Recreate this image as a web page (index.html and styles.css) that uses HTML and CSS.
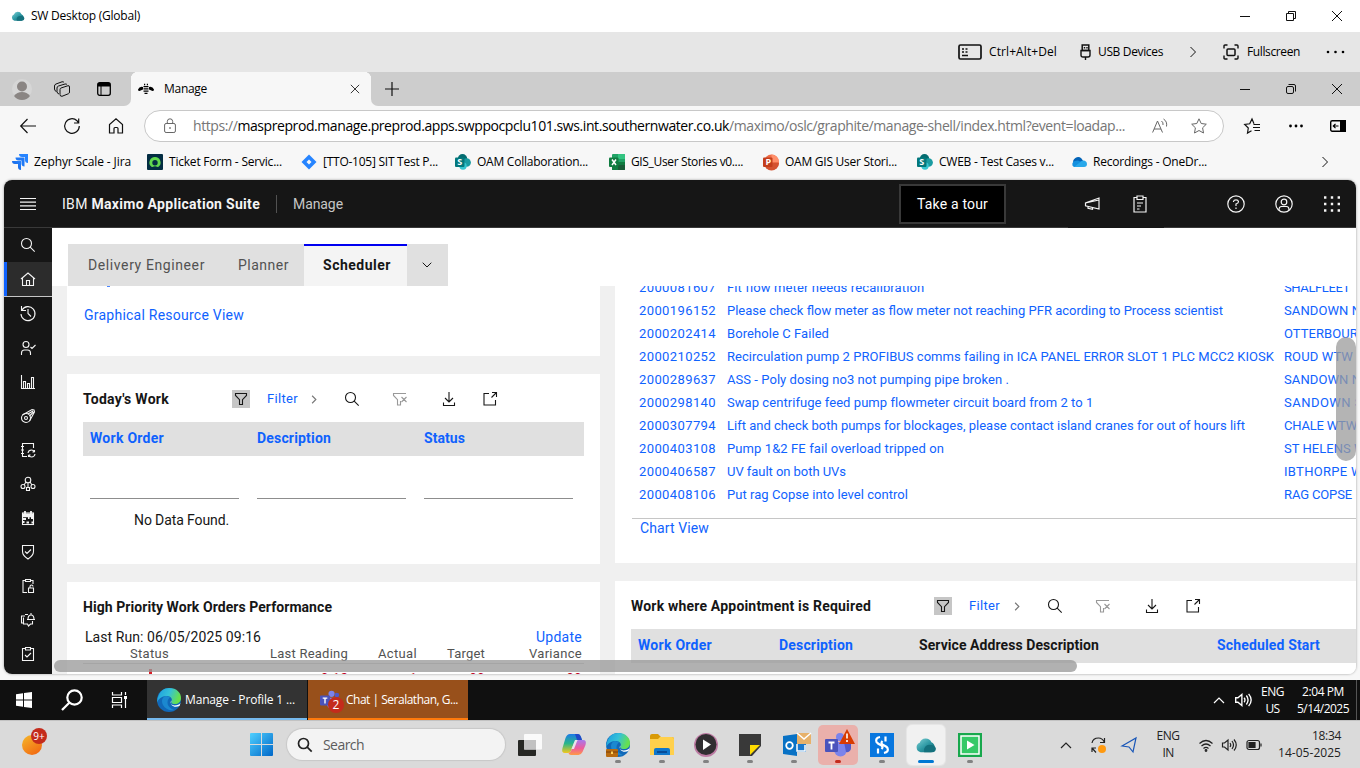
FILE: index.html
```html
<!DOCTYPE html>
<html lang="en">
<head>
<meta charset="utf-8">
<title>SW Desktop (Global)</title>
<link rel="stylesheet" href="styles.css">
</head>
<body>
<svg class="defs" width="0" height="0">
  <defs>
    <linearGradient id="gCloud" x1="0" y1="0" x2="1" y2="1"><stop offset="0" stop-color="#7fd0d4"/><stop offset=".5" stop-color="#2f9aa5"/><stop offset="1" stop-color="#0b5f6c"/></linearGradient>
    <linearGradient id="gEdge" x1="0" y1="0" x2="1" y2=".3"><stop offset="0" stop-color="#1a9be0"/><stop offset=".55" stop-color="#35c1d8"/><stop offset="1" stop-color="#66e04f"/></linearGradient>
    <linearGradient id="gWin" x1="0" y1="0" x2="1" y2="1"><stop offset="0" stop-color="#4fd0ff"/><stop offset="1" stop-color="#0067c8"/></linearGradient>
    <linearGradient id="gSun" x1="0" y1="0" x2=".7" y2="1"><stop offset="0" stop-color="#f5b92c"/><stop offset="1" stop-color="#f26a12"/></linearGradient>
    <linearGradient id="gJira" x1="1" y1="0" x2="0" y2="1"><stop offset="0" stop-color="#2684ff"/><stop offset="1" stop-color="#0d5bd8"/></linearGradient>
    <linearGradient id="gCopA" x1="0" y1="0" x2="0" y2="1"><stop offset="0" stop-color="#1d7be8"/><stop offset=".5" stop-color="#29b68a"/><stop offset="1" stop-color="#f3c81c"/></linearGradient>
    <linearGradient id="gCopB" x1="0" y1="0" x2="0" y2="1"><stop offset="0" stop-color="#a678ee"/><stop offset=".55" stop-color="#ee5c9c"/><stop offset="1" stop-color="#ff9a45"/></linearGradient>
  </defs>
  <symbol id="cloud" viewBox="0 0 24 20"><path d="M6 18a5.500 5.500 0 0 1-1-10.500A7 7 0 0 1 18 7a6 6 0 0 1 0 11z" fill="url(#gCloud)"/><path d="M10 18a6 6 0 0 1 7-8 5 5 0 0 1 6 4 4 4 0 0 1-4 4z" fill="#14717d"/></symbol>
  <symbol id="min" viewBox="0 0 12 12"><path d="M1 6.500h10" /></symbol>
  <symbol id="restore" viewBox="0 0 12 12"><path d="M1.500 3.500h7v7h-7zM3.500 3V1.500h7v7H9"/></symbol>
  <symbol id="restoreR" viewBox="0 0 12 12"><rect x="1.500" y="3.500" width="7" height="7" rx="1.500"/><path d="M3.500 1.500H9A1.500 1.500 0 0 1 10.500 3v5.500"/></symbol>
  <symbol id="close" viewBox="0 0 12 12"><path d="M1 1l10 10M11 1L1 11"/></symbol>
  <symbol id="chev" viewBox="0 0 8 12"><path d="M1.500 1l5 5-5 5"/></symbol>
  <symbol id="funnel" viewBox="0 0 16 16"><path d="M2.500 2.500h11v2l-4 4.200v4.800h-3V8.700l-4-4.200z"/></symbol>
  <symbol id="funnelx" viewBox="0 0 16 16"><path d="M14 2.500H1.500v2l4 4.200v5.300h3V10M9.500 6l5 5M14.500 6l-5 5"/></symbol>
  <symbol id="search" viewBox="0 0 16 16"><circle cx="6.500" cy="6.500" r="5"/><path d="M10.200 10.200l4.500 4.500"/></symbol>
  <symbol id="download" viewBox="0 0 16 16"><path d="M8 1v10M4 7l4 4 4-4M2.500 11.500v3h11v-3"/></symbol>
  <symbol id="launch" viewBox="0 0 16 16"><path d="M7 2.500H2v11.500h11.500V9M10 1.500h4.500V6M14.500 1.500l-5 5"/></symbol>
  <symbol id="edge" viewBox="0 0 24 24"><circle cx="12" cy="12" r="12" fill="#1168b8"/><path d="M1 9C3 3 7 0 12 0c8 0 12 5 12 10 0 4-3 6-6 6-3 0-4-1-3.500-2.500C16 10 13 8 9 8c-4 0-8 3-8.800 6.500A12 12 0 0 1 1 9z" fill="url(#gEdge)"/><path d="M14.500 12.500c-2 2 0 5 3 5 3 0 5-1 6-2.500l-1 3c-5 2-10 0-8-5.500z" fill="#fff"/><path d="M9 8c-4 1-5 5-3 9 2 4 7 6 11 5-6-2-9-8-4-13z" fill="#1b88d0"/></symbol>
  <symbol id="sharepoint" viewBox="0 0 16 16"><circle cx="7.500" cy="4.700" r="4.700" fill="#036c70"/><circle cx="11.600" cy="8.500" r="4.300" fill="#1a9ba1"/><circle cx="8" cy="12" r="3.700" fill="#37c6d0"/><rect y="3.500" width="9.500" height="9.500" rx="1" fill="#03787c"/><text x="2.300" y="11.200" class="glyph">S</text></symbol>
  <symbol id="volume" viewBox="0 0 16 16"><path d="M1.500 6v4h2L7 13V3L3.500 6zM9 6q1.500 2 0 4M11 4q3 4 0 8M13 2.500q4.500 5.500 0 11"/></symbol>
  <symbol id="teams" viewBox="0 0 26 26"><circle cx="15" cy="5" r="4" fill="#7b83eb"/><circle cx="22" cy="6.500" r="3" fill="#5059c9"/><path d="M9 10h13v8a6.500 6.500 0 0 1-13 0z" fill="#7b83eb"/><path d="M19 10h7v6a4 4 0 0 1-5 4z" fill="#5059c9"/><rect y="7" width="13" height="13" rx="1" fill="#4b53bc"/><path d="M3.500 10.500h6M6.500 10.500v7" stroke="#fff" stroke-width="1.800"/></symbol>
</svg>

<header class="titlebar">
  <svg class="i14"><use href="#cloud"/></svg>
  <span class="t" data-w="109">SW Desktop (Global)</span>
  <div class="winctl"><i><svg class="i12"><use href="#min"/></svg></i><i><svg class="i12"><use href="#restore"/></svg></i><i><svg class="i12"><use href="#close"/></svg></i></div>
</header>

<div class="toolbar">
  <svg class="kbd ic" viewBox="0 0 24 16"><rect x="1" y="1" width="22" height="14" rx="1.500" stroke-width="1.700"/><path d="M4 5h2M7.500 5h2M4 8h2M7.500 8h2M4 11.500h6" stroke-width="1.500"/></svg>
  <span class="t" data-w="68">Ctrl+Alt+Del</span>
  <svg class="usb ic" viewBox="0 0 11 16"><rect x="2.200" y="1" width="6.600" height="5.500" stroke-width="1.500"/><path d="M1 6.500h9v4.500q0 2-2 2H3q-2 0-2-2zM5.500 13v3M4.500 3v1.500M7 3v1.500" stroke-width="1.400"/></svg>
  <span class="t" data-w="65">USB Devices</span>
  <svg class="tbchev ic"><use href="#chev"/></svg>
  <svg class="full ic" viewBox="0 0 16 16"><path d="M1 4.500V2q0-1 1-1h2.500M11.500 1H14q1 0 1 1v2.500M15 11.500V14q0 1-1 1h-2.500M4.500 15H2q-1 0-1-1v-2.500" stroke-width="1.400"/><rect x="4" y="5" width="8" height="6.500" rx="1" stroke-width="1.500"/></svg>
  <span class="t" data-w="53">Fullscreen</span>
  <svg class="dots" viewBox="0 0 20 4"><circle cx="2" cy="2" r="1.300"/><circle cx="9.500" cy="2" r="1.300"/><circle cx="17" cy="2" r="1.300"/></svg>
</div>

<div class="tabstrip">
  <div class="strip-left">
    <svg class="i20" viewBox="0 0 20 20"><circle cx="10" cy="10" r="10" fill="#d6d6d6"/><circle cx="10" cy="7.500" r="5" fill="#8a8583"/><path d="M2 17q3-4 8-4t8 4q-3 4-8 4t-8-4z" fill="#8a8583"/></svg>
    <svg class="coll ic" viewBox="0 0 16 16"><path d="M2.500 10.500Q.5 10 .5 8V5q0-1.500 1.500-2L8 .8q1.500-.3 2 .7M5 13q-2-.5-2-2.500V7q0-1.500 1.500-2L11 3q1.500-.3 2 .7"/><path d="M7 7l7-2.300q1.500-.3 1.500 1.300v5q0 1.300-1 1.700L8 15.300Q6 15.500 6 13.500V8.500Q6 7.400 7 7z"/></svg>
    <svg class="sq" viewBox="0 0 14 14"><rect x=".7" y=".7" width="12.600" height="12.600" rx="2" fill="none" stroke="#000" stroke-width="1.300"/><path d="M1 1h12v3.500H1z"/><path d="M4 4v9" stroke="#000"/></svg>
  </div>
  <div class="tab">
    <svg class="i16" viewBox="0 0 16 16"><path d="M0 8.500Q1.500 5 5 6v2.500L1.500 10Q0 10 0 8.500zM16 8.500Q14.500 5 11 6v2.500l3.500 1.500Q16 10 16 8.500zM5.500 5h5v1.200h-5zM5.500 7.300h5v1.200h-5zM5.500 9.500h5v1.200h-5zM6.500 11.800h3v1.200h-3zM6 2.800h1.200v1.400H6zM8.800 2.800H10v1.400H8.800z"/></svg>
    <span class="t" data-w="43">Manage</span>
    <svg class="i10 ic"><use href="#close"/></svg>
  </div>
  <svg class="plus ic" viewBox="0 0 14 14"><path d="M7 0v14M0 7h14" stroke-width="1.200"/></svg>
  <div class="winctl"><i><svg class="i12"><use href="#min"/></svg></i><i><svg class="i12"><use href="#restoreR"/></svg></i><i><svg class="i12"><use href="#close"/></svg></i></div>
</div>

<div class="address">
  <svg class="i16 ic" viewBox="0 0 16 16"><path d="M16 8H.8M7.500 1L.7 8l6.800 7" stroke-width="1.200"/></svg>
  <svg class="i16 ic" viewBox="0 0 16 16"><path d="M15.300 8A7.300 7.300 0 1 1 13 2.700L14.500 5M14.700.5V5H10" stroke-width="1.200"/></svg>
  <svg class="i16 ic" viewBox="0 0 16 16"><path d="M1.500 15V6.500L8 .8l6.500 5.700V15H10v-4.500q0-1-1-1H7q-1 0-1 1V15z" stroke-width="1.200"/></svg>
  <div class="url">
    <svg class="lock" viewBox="0 0 12 16"><rect x=".6" y="5.500" width="10.800" height="9" rx="1.500"/><path d="M3.300 5.500v-2a2.700 2.700 0 0 1 5.400 0v2"/><circle cx="6" cy="10" r=".5"/></svg>
    <span class="t" data-w="932">https://<b>maspreprod.manage.preprod.apps.swppocpclu101.sws.int.southernwater.co.uk</b>/maximo/oslc/graphite/manage-shell/index.html?event=loadap...</span>
    <svg class="i16 g read" viewBox="0 0 16 16"><path d="M.6 14.500L5.500 3l5 11.500M2 11h7M9.500 3q2 1.500 1.500 4M11.500 1q4 2.500 3 7.500"/></svg>
    <svg class="i16 g" viewBox="0 0 16 16"><path d="M8 .8l2.200 4.700 5.100.7-3.700 3.600.9 5.200L8 12.500 3.500 15l.9-5.200L.7 6.200l5.100-.7z"/></svg>
  </div>
  <svg class="i16 ic" viewBox="0 0 16 16"><path d="M7.500 12.700L3.500 15l.8-5L.7 6.500l5-.7L8 1l2 4.800M9.500 6.500H16M9 9.500h7M10.500 12.500H16" stroke-width="1.200"/></svg>
  <svg class="more" viewBox="0 0 14 4"><circle cx="1.500" cy="2" r="1.400"/><circle cx="7" cy="2" r="1.400"/><circle cx="12.500" cy="2" r="1.400"/></svg>
  <svg class="i16" viewBox="0 0 16 16"><rect x=".7" y="2.700" width="14.600" height="10.600" rx="1.500" fill="none" stroke="#000" stroke-width="1.400"/><path d="M10 2h6v12h-6z"/><path d="M8.500 8H3.500M5.500 5.800L3.300 8l2.200 2.200" fill="none" stroke="#000" stroke-width="1.200"/></svg>
</div>

<nav class="bookmarks">
  <div><svg class="i16" viewBox="0 0 16 16"><path d="M7 0h9v9q-3 0-3-3V3h-3Q7 3 7 0z" fill="#2684ff"/><path d="M3.500 3.500h9v9q-3 0-3-3v-3h-3q-3 0-3-3z" fill="#2079f5"/><path d="M0 7h9v9q-3 0-3-3v-3H3Q0 10 0 7z" fill="url(#gJira)"/></svg><span class="t" data-w="97">Zephyr Scale - Jira</span></div>
  <div><svg class="i16" viewBox="0 0 16 16"><rect width="16" height="16" rx="1" fill="#032d42"/><path d="M8 3a5.500 5.500 0 0 0-3.500 9.800q.8.400 1.500 0 2-1 4 0 .8.400 1.500 0A5.500 5.500 0 0 0 8 3zm0 3a2.700 2.700 0 1 1 0 5.400A2.700 2.700 0 0 1 8 6z" fill="#62d84e"/></svg><span class="t" data-w="113">Ticket Form - Servic...</span></div>
  <div><svg class="i16" viewBox="0 0 16 16"><path d="M8 .5L15.500 8 8 15.500.5 8z" fill="#2684ff"/><path d="M8 5.500L10.500 8 8 10.500 5.500 8z" fill="#f7f7f7"/></svg><span class="t" data-w="115">[TTO-105] SIT Test P...</span></div>
  <div><svg class="i16"><use href="#sharepoint"/></svg><span class="t" data-w="111">OAM Collaboration...</span></div>
  <div><svg class="i16" viewBox="0 0 16 16"><rect x="3" width="13" height="16" rx="1" fill="#21a366"/><path d="M3 8h13v7q0 1-1 1H3z" fill="#107c41"/><path d="M9 0h6q1 0 1 1v4H9z" fill="#33c481"/><path d="M9 11h7v4q0 1-1 1H9z" fill="#185c37"/><rect y="3.500" width="9.500" height="9.500" rx="1" fill="#107c41"/><path d="M3 5.500l4 5.500M7 5.500L3 11" stroke="#fff" stroke-width="1.500"/></svg><span class="t" data-w="112">GIS_User Stories v0....</span></div>
  <div><svg class="i16" viewBox="0 0 16 16"><circle cx="8.500" cy="8" r="7.500" fill="#ed6c47"/><path d="M8.500.5A7.500 7.500 0 0 1 16 8H8.500z" fill="#ff8f6b"/><path d="M1 9h15a7.500 7.500 0 0 1-15 0z" fill="#d35230"/><rect y="3.500" width="9.500" height="9.500" rx="1" fill="#c43e1c"/><text x="2.600" y="11.200" class="glyph">P</text></svg><span class="t" data-w="112">OAM GIS User Stori...</span></div>
  <div><svg class="i16"><use href="#sharepoint"/></svg><span class="t" data-w="115">CWEB - Test Cases v...</span></div>
  <div><svg class="i16" viewBox="0 0 16 16"><path d="M2.500 10a5 5 0 0 1 8-5.500l2 3L8 12z" fill="#0364b8"/><path d="M3 13a3.200 3.200 0 0 1 1-6q3-1 5 .5l2-.500a4.500 4.500 0 0 1 2 6z" fill="#1490df"/><path d="M3 13q4-3 7-5.500a3.500 3.500 0 0 1 6 2.500q0 3-3 3z" fill="#28a8ea"/></svg><span class="t" data-w="114">Recordings - OneDr...</span></div>
  <svg class="bchev ic"><use href="#chev"/></svg>
</nav>

<section class="app">
  <header class="apphead">
    <svg class="i16 burger" viewBox="0 0 16 16"><path d="M0 2.500h16M0 6.200h16M0 9.800h16M0 13.500h16"/></svg>
    <span class="t brand" data-w="198">IBM <b>Maximo Application Suite</b></span>
    <span class="t product" data-w="50">Manage</span>
    <button class="tour"><span class="t" data-w="71">Take a tour</span></button>
    <div class="slots flat">
      <i><svg class="i16" viewBox="0 0 16 16"><path d="M15 2v11L1.500 9.800v-3zM1.500 6.800L15 4M4 10.300v2l4.500 1v-2"/></svg></i>
      <i><svg class="clip" viewBox="0 0 16 18"><path d="M5 2.500H2v14.500h12V2.500H11M5 1h6v3.500H5zM5 8h6M5 11h4M5 14h2.500"/></svg></i>
    </div>
    <div class="slots">
      <i><svg class="i18" viewBox="0 0 18 18"><circle cx="9" cy="9" r="8.200"/><path d="M6.500 7V6.500q.3-1.700 2.500-1.700t2.500 1.900Q11.500 8 9 9v2M9 12.500v1.500"/></svg></i>
      <i><svg class="i18" viewBox="0 0 18 18"><circle cx="9" cy="9" r="8.200"/><circle cx="9" cy="7" r="2.800"/><path d="M4 15q0-3.500 2.500-3.500h5Q14 11.500 14 15"/></svg></i>
      <i><svg class="i16 nine" viewBox="0 0 16 16"><path d="M0 1.500h16M0 8h16M0 14.500h16"/></svg></i>
    </div>
  </header>
  <div class="body">
    <aside class="side">
      <i><svg class="i16"><use href="#search"/></svg></i>
      <i class="on"><svg class="i16" viewBox="0 0 16 16"><path d="M1 8l7-6 7 6M2.500 7v7.500h11V7M6.500 14.500v-5h3v5"/></svg></i>
      <i><svg class="i16" viewBox="0 0 16 16"><path d="M2 5a7 7 0 1 1-1 4M1.500 1v4.500H6M8 4v4.500l3 3"/></svg></i>
      <i><svg class="i16" viewBox="0 0 16 16"><circle cx="6" cy="4.500" r="3"/><path d="M1.500 15v-2q0-3 3-3h3q3 0 3 3v2M10.500 7l1.500 1.500 3.500-3.500"/></svg></i>
      <i><svg class="i16" viewBox="0 0 16 16"><path d="M1.500 1v13.500H15M3.500 14V7.500h2V14M7.500 14V9.500h2V14M11.500 14V3.500h2V14"/></svg></i>
      <i><svg class="i16" viewBox="0 0 16 16"><circle cx="6" cy="10" r="4.500"/><circle cx="6" cy="10" r="1.500"/><path d="M2.500 7L12 1.500l2 .500.500 2L9.500 13M8 6l5-3M9.500 8l4-4"/></svg></i>
      <i><svg class="i16" viewBox="0 0 16 16"><path d="M13.500 6V1.500h-11v13H7M1 4.500h3M1 8h3M1 11.500h3M8 11q.5-3 3.500-3 2 0 3 2V8M14.500 10h-2M15 12q-.5 3-3.500 3-2 0-3-2v2M8.500 13h2"/></svg></i>
      <i><svg class="i16" viewBox="0 0 16 16"><circle cx="8" cy="4" r="2.800"/><circle cx="3" cy="10.500" r="2"/><circle cx="13" cy="10.500" r="2"/><path d="M8 7v4M6 6l-2 3M10 6l2 3M6.500 11.500h3v3h-3z"/></svg></i>
      <i><svg class="i16" viewBox="0 0 16 16"><rect x="2.500" y="3" width="11" height="11.500"/><path d="M2 4.500h12M5 1v3M11 1v3" stroke-width="1.800"/><path d="M3 9h3M8 8h1.500M11 8h2M3 12h1.500M6.500 12.500h2.500M2.500 6.200h11M11.500 12.500h2" stroke-width="2.200"/></svg></i>
      <i><svg class="i16" viewBox="0 0 16 16"><path d="M2.500 1.500h11v6q0 4-5.500 7.500-5.500-3.500-5.500-7.500zM5 7.500l2 2 4-4"/></svg></i>
      <i><svg class="i16" viewBox="0 0 16 16"><path d="M5 2.500H3v12h4M11 2.500h2V6M5.500 1.500h5v2h-5zM8.500 10h5v4.500h-5zM10 10V8.500q0-1.500 1.500-1.500t1.500 1.500"/></svg></i>
      <i><svg class="i16" viewBox="0 0 16 16"><path d="M5 4H1.500v7H4M3.500 5.500V12h4l1 2 2-2h2V9M7 7.500h8M8 7.500q0-4.500 3-4.500t3 4.500M11 1v2M5 2.500h3"/></svg></i>
      <i><svg class="i16" viewBox="0 0 16 16"><path d="M5 2.500H2.500v12h11v-12H11M5.500 1.500h5v2.500h-5zM5 9l2 2 4-4"/></svg></i>
    </aside>
    <main class="main">
      <div class="tabs">
        <span class="ptab"><span class="t" data-w="117">Delivery Engineer</span></span>
        <span class="ptab"><span class="t" data-w="51">Planner</span></span>
        <span class="ptab sel"><span class="t" data-w="68">Scheduler</span></span>
        <span class="drop"><svg viewBox="0 0 10 6"><path d="M.7.7L5 5 9.300.7"/></svg></span>
      </div>
      <div class="cols">
        <div class="col left">
          <section class="card views"><div class="sliver"></div><a class="t" data-w="160">Graphical Resource View</a></section>
          <section class="card today">
            <div class="bar"><h2 class="t" data-w="86">Today's Work</h2>
              <div class="tools"><i class="fb"><svg class="i16"><use href="#funnel"/></svg></i><a class="t" data-w="31">Filter</a><svg class="fc"><use href="#chev"/></svg><svg class="i16"><use href="#search"/></svg><svg class="i16 dim"><use href="#funnelx"/></svg><svg class="i16"><use href="#download"/></svg><svg class="i16"><use href="#launch"/></svg></div></div>
            <div class="thead three"><a class="t" data-w="74">Work Order</a><a class="t" data-w="74">Description</a><a class="t" data-w="41">Status</a></div>
            <div class="inputs"><u></u><u></u><u></u></div>
            <p class="nodata"><span class="t" data-w="95">No Data Found.</span></p>
          </section>
          <section class="card perf">
            <h2 class="t" data-w="249">High Priority Work Orders Performance</h2>
            <div class="run"><span class="t" data-w="176">Last Run: 06/05/2025 09:16</span><a class="t" data-w="46">Update</a></div>
            <div class="kpi"><span><span class="t" data-w="39">Status</span></span><span><span class="t" data-w="78">Last Reading</span></span><span><span class="t" data-w="39">Actual</span></span><span><span class="t" data-w="38">Target</span></span><span><span class="t" data-w="53">Variance</span></span></div>
            <div class="kpi vals"><span><i class="flag"></i></span><span>0.12</span><span>1</span><span>00</span><span>00</span></div>
          </section>
        </div>
        <div class="col right">
          <section class="card list">
            <div class="rows">
              <a class="t" data-w="77">2000081607</a><a class="t" data-w="197">Fit flow meter needs recalibration</a><a class="t" data-w="66">SHALFLEET</a>
              <a class="t" data-w="77">2000196152</a><a class="t" data-w="496">Please check flow meter as flow meter not reaching PFR acording to Process scientist</a><a class="t" data-w="131">SANDOWN NEW WTW</a>
              <a class="t" data-w="77">2000202414</a><a class="t" data-w="102">Borehole C Failed</a><a class="t" data-w="125">OTTERBOURNE WTW</a>
              <a class="t" data-w="77">2000210252</a><a class="t" data-w="547">Recirculation pump 2 PROFIBUS comms failing in ICA PANEL ERROR SLOT 1 PLC MCC2 KIOSK</a><a class="t" data-w="69">ROUD WTW</a>
              <a class="t" data-w="77">2000289637</a><a class="t" data-w="282">ASS - Poly dosing no3 not pumping pipe broken .</a><a class="t" data-w="131">SANDOWN NEW WTW</a>
              <a class="t" data-w="77">2000298140</a><a class="t" data-w="366">Swap centrifuge feed pump flowmeter circuit board from 2 to 1</a><a class="t" data-w="131">SANDOWN SOUTH W</a>
              <a class="t" data-w="77">2000307794</a><a class="t" data-w="518">Lift and check both pumps for blockages, please contact island cranes for out of hours lift</a><a class="t" data-w="73">CHALE WTW</a>
              <a class="t" data-w="77">2000403108</a><a class="t" data-w="217">Pump 1&amp;2 FE fail overload tripped on</a><a class="t" data-w="101">ST HELENS WTW</a>
              <a class="t" data-w="77">2000406587</a><a class="t" data-w="119">UV fault on both UVs</a><a class="t" data-w="99">IBTHORPE WTW</a>
              <a class="t" data-w="77">2000408106</a><a class="t" data-w="181">Put rag Copse into level control</a><a class="t" data-w="68">RAG COPSE</a>
            </div>
            <div class="chart"><a class="t" data-w="69">Chart View</a></div>
          </section>
          <section class="card appt">
            <div class="bar"><h2 class="t" data-w="240">Work where Appointment is Required</h2>
              <div class="tools"><i class="fb"><svg class="i16"><use href="#funnel"/></svg></i><a class="t" data-w="31">Filter</a><svg class="fc"><use href="#chev"/></svg><svg class="i16"><use href="#search"/></svg><svg class="i16 dim"><use href="#funnelx"/></svg><svg class="i16"><use href="#download"/></svg><svg class="i16"><use href="#launch"/></svg></div></div>
            <div class="thead four"><a class="t" data-w="74">Work Order</a><a class="t" data-w="74">Description</a><span class="t" data-w="180">Service Address Description</span><a class="t" data-w="103">Scheduled Start</a></div>
          </section>
        </div>
      </div>
      <div class="vbar"></div>
      <div class="hbar"></div>
    </main>
  </div>
</section>

<div class="remote">
  <svg class="i16 rwin" viewBox="0 0 16 16"><path d="M0 2.300L7 1.300v6.200H0zM8 1.100L16 0v7.500H8zM0 8.500h7v6.200l-7-1zM8 8.500h8V16l-8-1.100z" fill="#fff"/></svg>
  <svg class="rsearch" viewBox="0 0 22 22"><circle cx="13.500" cy="8.500" r="7.200"/><path d="M8.300 13.700L1 21"/></svg>
  <svg class="rview" viewBox="0 0 17 16"><path d="M1.500 0v3h9V0M1.500 16v-3h9v3M1.500 5.500h9v5h-9zM14.500 0v3M14.500 7v9"/><path d="M13 4h3v3h-3z" fill="#fff" stroke="none"/></svg>
  <div class="task edge"><svg class="i24"><use href="#edge"/></svg><span class="t" data-w="110">Manage - Profile 1 ...</span></div>
  <div class="task chat"><span class="badged"><svg class="i20"><use href="#teams"/></svg><em>2</em></span><span class="t" data-w="112">Chat | Seralathan, G...</span></div>
  <div class="tray">
    <svg class="up" viewBox="0 0 12 8"><path d="M1 7l5-5 5 5"/></svg>
    <svg class="i18 vol"><use href="#volume"/></svg>
    <div class="two l"><span class="t" data-w="23">ENG</span><span class="t" data-w="14">US</span></div>
    <div class="two d"><span class="t" data-w="42">2:04 PM</span><span class="t" data-w="52">5/14/2025</span></div>
  </div>
</div>

<footer class="host">
  <div class="weather"><svg class="i20" viewBox="0 0 20 20"><circle cx="10" cy="10" r="10" fill="url(#gSun)"/></svg><em>9+</em></div>
  <svg class="hwin" viewBox="0 0 23 23"><path d="M0 1q0-1 1-1h10v11H0zM12 0h10q1 0 1 1v10H12zM0 12h11v11H1q-1 0-1-1zM12 12h11v10q0 1-1 1H12z" fill="url(#gWin)"/></svg>
  <div class="hsearch"><svg class="i16"><use href="#search"/></svg><span class="t" data-w="41">Search</span></div>
  <div class="apps">
    <i><svg class="i24" viewBox="0 0 24 24"><rect y="7" width="18" height="16" rx="1" fill="#262724"/><rect x="6" y="1" width="18" height="15.500" rx="1" fill="#fafafa"/><path d="M6 7h12v9.500H6z" fill="#c2c2c2"/></svg></i>
    <i><svg class="i24" viewBox="0 0 24 24"><path d="M8 1h8q2 0 3 3l1 3h-5q-2 0-3 3l-3 8q-1 2-3 2H3q-4 0-2.500-5l3-10Q5 1 8 1z" fill="url(#gCopA)"/><path d="M17 7h4q4 0 2.500 5l-3 7q-1.500 3-4 3H9q-2 0-2.500-2 2 0 3-3l3-7Q14 7 17 7z" fill="url(#gCopB)"/><path d="M13 7h2.500L12 16H9.500z" fill="#e9e4ea"/><path d="M13 1h3q2 0 3 3l1 3h-5z" fill="#2048c8"/></svg></i>
    <i class="run1"><svg class="i24" viewBox="0 0 24 24"><use href="#edge" width="24" height="24"/><rect y="16" width="12" height="8" rx="1" fill="#b86b10"/><path d="M0 19h12" stroke="#7a3e06"/><path d="M5 18.500h2v2.500H5z" fill="#ffd25a"/></svg></i>
    <i class="run1"><svg class="i24" viewBox="0 0 24 24"><path d="M0 3q0-2 2-2h6l3 3h11q2 0 2 2v4H0z" fill="#d99a06"/><path d="M0 6h8l2-2h12q2 0 2 2v16H0z" fill="#ffd04c"/><path d="M4 22v-5q0-2 2-2h12q2 0 2 2v5z" fill="#0f77cc"/><path d="M7 19h10" stroke="#074c98" stroke-width="2"/></svg></i>
    <i class="run1"><svg class="i24" viewBox="0 0 24 24"><circle cx="12" cy="12" r="12" fill="#bd7ca4"/><circle cx="12" cy="11.500" r="10.500" fill="#302e31"/><path d="M9 6.500l8 5-8 5.500z" fill="#fff"/></svg></i>
    <i class="run1"><svg class="i24" viewBox="0 0 24 24"><path d="M1 1h22v12l-9 10H1z" fill="#393939"/><path d="M12 12h10L12 22z" fill="#ffdc00"/></svg></i>
    <i class="run1 mail"><svg class="outlook" viewBox="0 0 28 24"><path d="M14 7h9v12h-9z" fill="#1a78cd"/><path d="M0 3l14-2v22L0 21z" fill="#0872c5"/><circle cx="6.500" cy="12.500" r="3.300" fill="none" stroke="#fff" stroke-width="1.800"/><path d="M14 0h14v11H14z" fill="#e7b16a"/><path d="M14 0l7 6 7-6M14 11v7h8v-6" fill="none" stroke="#fff" stroke-width="1.500"/></svg></i>
    <i class="run1 alert"><svg class="i26"><use href="#teams"/></svg><svg class="warn" viewBox="0 0 16 15"><path d="M8 0l8 15H0z" fill="#d83b01"/><path d="M8 4.500v5M8 11v2" stroke="#fff" stroke-width="1.600"/></svg></i>
    <i class="run1"><svg class="i24" viewBox="0 0 24 24"><path d="M0 0h24v24H0z" fill="#0877df"/><path d="M10 4Q5 5 6.500 9q.8 1.500 5 3.500 2 1.500 0 3.500M14 20q5-1 3.500-5-.8-1.500-5-3.500-2-1.500 0-3.500M15.500 3.500v5M8 15.500v5" fill="none" stroke="#fff" stroke-width="2.200"/></svg></i>
    <i class="cur"><svg class="hcloud"><use href="#cloud"/></svg></i>
    <i class="run1"><svg class="i24" viewBox="0 0 24 24"><path d="M0 0h24v24H0z" fill="#18a84d"/><path d="M3 3h18v18H3z" fill="#35c967" stroke="#fff" stroke-width="1.500"/><path d="M9 7.500l7.500 4.500L9 16.500z" fill="#fff"/></svg></i>
  </div>
  <div class="htray">
    <svg class="up" viewBox="0 0 12 8"><path d="M1 7l5-5 5 5"/></svg>
    <svg class="i18 sync" viewBox="0 0 18 18"><path d="M3 7q1-5 6.500-5 4 0 6 4.500M15.500 2v4.500H11M7 12H3v4M3 12l4 4.500"/><circle cx="13" cy="13" r="4" fill="#ff9a10" stroke="none"/></svg>
    <svg class="i16 loc" viewBox="0 0 16 16"><path d="M1 9L15 1l-3 14-4-5z"/></svg>
    <div class="two hl"><span class="t" data-w="23">ENG</span><span class="t" data-w="11">IN</span></div>
    <svg class="i16 wifi" viewBox="0 0 16 16"><path d="M1.500 6.500q6.500-6 13 0M3.500 9q4.500-4 9 0M5.500 11.500q2.500-2.200 5 0"/><circle cx="8" cy="13.500" r=".8"/></svg>
    <svg class="i16 hvol"><use href="#volume"/></svg>
    <svg class="i16 bat" viewBox="0 0 16 16"><rect x="1" y="3.500" width="12.500" height="9" rx="2"/><path d="M3 5.500h6v5H3z" fill="#222"/><path d="M15 6.500v3" /></svg>
    <div class="two hd"><span class="t" data-w="29">18:34</span><span class="t" data-w="63">14-05-2025</span></div>
  </div>
</footer>
<script src="labels.js"></script>
</body>
</html>
```
FILE: styles.css
```css
* { box-sizing: border-box; }
html, body { margin: 0; width: 1360px; height: 768px; overflow: hidden; }
body { display: flex; flex-direction: column; background: #f7f7f7; color: #000; font: 12px/16px "Open Sans", "Noto Sans", sans-serif; }
i, em, b { font-style: normal; }
a { text-decoration: none; }
h2, p { margin: 0; }
svg { display: block; flex: none; overflow: visible; }
.defs { position: absolute; }
.t { display: inline-block; flex: none; white-space: nowrap; }
.glyph { font: bold 9px "Open Sans", sans-serif; fill: #fff; }
.i10 { width: 10px; height: 10px; }
.i12 { width: 12px; height: 12px; }
.i14 { width: 14px; height: 12px; }
.i16 { width: 16px; height: 16px; }
.i18 { width: 18px; height: 18px; }
.i20 { width: 20px; height: 20px; }
.i24 { width: 24px; height: 24px; }
.i26 { width: 26px; height: 26px; }
.ic, .winctl svg { fill: none; stroke: #111; }
.winctl { display: flex; margin-left: auto; height: 100%; }
.winctl i { width: 46px; display: flex; align-items: center; justify-content: center; }

.titlebar { height: 32px; background: #fff; display: flex; align-items: center; padding-left: 11px; gap: 6px; flex: none; }
.toolbar { height: 40px; background: #e6e6e6; display: flex; align-items: center; padding-left: 958px; flex: none; }
.kbd { width: 24px; height: 16px; margin-right: 7px; }
.usb { width: 11px; height: 16px; margin: 0 7px 0 23px; }
.tbchev { width: 8px; height: 12px; margin: 0 26px; }
.full { width: 16px; height: 16px; margin-right: 8px; }
.dots { width: 20px; height: 4px; margin-left: 26px; }

.tabstrip { height: 34px; background: #f7f7f7; display: flex; flex: none; }
.strip-left { width: 131px; background: #cdcdcd; display: flex; align-items: center; padding-left: 12px; border-bottom-right-radius: 7px; }
.coll { width: 16px; height: 16px; margin: 0 27px 0 22px; }
.sq { width: 14px; height: 14px; }
.tab { width: 240px; display: flex; align-items: center; padding: 0 11px 0 7px; background: radial-gradient(circle at 7px 7px, #f7f7f7 7px, #cdcdcd 7.500px) 0 0 / 7px 7px no-repeat, radial-gradient(circle at 0 7px, #f7f7f7 7px, #cdcdcd 7.500px) 100% 0 / 7px 7px no-repeat, #f7f7f7; }
.tab .t { margin: 0 auto 0 10px; }
.tabstrip > .plus { width: 43px; height: 34px; padding: 10px 15px 10px 14px; background: #cdcdcd; border-bottom-left-radius: 7px; }
.tabstrip > .winctl { flex: 1; justify-content: flex-end; margin: 0; background: #cdcdcd; }

.address { height: 40px; display: flex; align-items: center; padding-left: 20px; flex: none; }
.address > svg + svg { margin-left: 28px; }
.url { width: 1080px; height: 32px; margin: 0 20px; background: #fff; border: 1px solid #c8c8c8; border-radius: 16px; display: flex; align-items: center; padding-left: 19px; font-size: 14px; color: #767676; }
.url b { font-weight: 400; color: #000; }
.lock { width: 12px; height: 16px; margin-right: 17px; }
.lock, .g { fill: none; stroke: #666; }
.read { margin: 0 23px 0 27px; }
.address > .more { width: 14px; height: 4px; margin-left: 29px; }
.address > .more + svg { margin-left: 27px; }

.bookmarks { height: 32px; display: flex; align-items: center; padding-left: 12px; flex: none; }
.bookmarks > div { width: 154px; display: flex; gap: 6px; align-items: center; }
.bookmarks > div:first-child { width: 135px; }
.bchev { width: 8px; height: 12px; margin-left: 96px; }

.app { margin: 2px 4px 6px; height: 494px; border-radius: 8px; overflow: hidden; box-shadow: 0 0 2px 1px #ccc; display: flex; flex-direction: column; flex: none; font-family: Roboto, "Noto Sans", sans-serif; background: #fff; }
.apphead { height: 48px; background: #161616; color: #f4f4f4; display: flex; align-items: center; padding-left: 16px; font-size: 14px; box-shadow: inset 0 -1px #393939; flex: none; }
.apphead svg { fill: none; stroke: #f4f4f4; stroke-width: 1.200; }
.brand { margin-left: 26px; }
.brand b { font-weight: 700; }
.product { position: relative; margin-left: 33px; color: #c6c6c6; }
.product::before { content: ""; position: absolute; left: -17px; top: -1px; width: 1px; height: 18px; background: #525252; }
.tour { margin: 0 62px 0 556px; width: 107px; height: 40px; padding: 0; background: #000; border: 2px solid #393939; color: #fff; font: inherit; flex: none; }
.slots { display: flex; height: 48px; }
.slots i { width: 48px; display: flex; align-items: center; justify-content: center; }
.flat { background: #161616; margin-right: 48px; }
.clip { width: 16px; height: 18px; }
.apphead .nine { stroke-width: 2.400; stroke-dasharray: 2.400 4.400; }
.body { display: flex; flex: 1; min-height: 0; }
.side { width: 48px; background: #161616; flex: none; }
.side i { height: 34px; display: flex; align-items: center; justify-content: center; }
.side svg { fill: none; stroke: #f4f4f4; stroke-width: 1.100; }
.side i:nth-child(n+4) { padding-top: 2px; }
.side .on { background: #2c2c2c; box-shadow: inset 3px 0 #0f62fe, 0 1px #c6c6c6; }

.main { position: relative; width: 1304px; background: #f0f0f0; overflow: hidden; font-size: 13px; }
.main a { color: #0f62fe; }
.tabs { height: 58px; background: #fff; padding: 16px 0 0 16px; display: flex; font-size: 14px; color: #525252; }
.ptab { background: #e0e0e0; display: flex; align-items: center; padding: 0 16px 0 20px; }
.ptab + .ptab { padding: 0 15px 0 17px; }
.tabs .sel { background: #f4f4f4; border-top: 2px solid #0000f0; color: #161616; font-weight: 700; padding: 0 16px 2px 19px; }
.drop { width: 41px; background: #e0e0e0; display: flex; align-items: center; justify-content: center; padding-right: 2px; }
.drop svg { width: 10px; height: 6px; fill: none; stroke: #161616; }
.cols { display: flex; padding-left: 15px; gap: 15px; }
.col { display: flex; flex-direction: column; gap: 18px; flex: none; }
.left { width: 533px; }
.right { width: 741px; }
.card { background: #fff; }
.views { height: 70px; padding: 0 17px; font-size: 14px; }
.sliver { width: 3px; height: 1px; margin-left: 23px; background: #4a85ff; }
.views .t { margin-top: 20px; }
.today { height: 190px; }
.bar { height: 48px; display: flex; align-items: center; padding: 2px 0 0 16px; }
h2 { font-size: 14px; line-height: 18px; font-weight: 700; color: #161616; }
.tools { display: flex; align-items: center; margin-left: 63px; }
.tools svg { fill: none; stroke: #161616; stroke-width: 1.100; }
.fb { width: 18px; height: 18px; padding: 1px; background: #c6c6c6; margin-right: 17px; }
.tools .fc { width: 6px; height: 9px; margin: 0 27px 0 13px; stroke: #777; stroke-width: 1.500; }
.tools .fc + svg { margin-right: 32px; }
.tools .dim { stroke: #999; margin-right: 33px; }
.tools .dim + svg { margin-right: 25px; }
.right .tools .fc { margin: 0 27px 0 14px; }
.thead { height: 34px; background: #e0e0e0; display: grid; align-items: center; justify-items: start; font-size: 14px; font-weight: 700; color: #161616; padding: 0 0 2px 7px; }
.three { margin: 0 16px; grid-template-columns: repeat(3, 167px); }
.four { margin-left: 16px; grid-template-columns: 141px 140px 298px 120px; }
.inputs { display: flex; gap: 18px; padding: 42px 0 0 23px; }
.inputs u { width: 149px; height: 1px; background: #8d8d8d; }
.nodata { padding: 13px 0 0 67px; font-size: 14px; }
.nodata, .run { color: #161616; }
.perf { height: 120px; padding: 16px 0 0 16px; }
.run { display: flex; justify-content: space-between; font-size: 14px; padding: 13px 18px 0 2px; }
.kpi { display: grid; grid-template-columns: 86px 179px 69px 68px 97px; justify-items: end; color: #525252; line-height: 16px; padding-top: 1px; height: 19px; border-bottom: 1px solid #c6c6c6; margin-right: 16px; }
.vals { padding-top: 7px; color: #c0001c; border: 0; height: 26px; font-size: 14px; }
.flag { display: block; width: 3px; height: 12px; margin: -2px 17px 0 0; background: #da1e28; }
.list { height: 277px; overflow: hidden; }
.rows { display: grid; grid-template-columns: 88px 557px 200px; grid-auto-rows: 23px; align-items: center; justify-items: start; padding-left: 24px; margin-top: -10px; height: 242px; }
.chart { border-top: 1px solid #c6c6c6; margin-left: 17px; padding: 1px 0 0 8px; font-size: 14px; }
.appt { height: 120px; }
.vbar { position: absolute; right: 0; top: 109px; width: 20px; height: 124px; border-radius: 10px; background: rgba(155,155,155,.75); }
.hbar { position: absolute; left: 2px; top: 432px; width: 1023px; height: 12px; border-radius: 6px; background: rgba(155,155,155,.78); }

.remote { height: 40px; background: #101010; display: flex; align-items: center; padding-left: 16px; color: #fff; flex: none; }
.remote > svg, .tray svg { fill: none; stroke: #fff; stroke-width: 1.200; }
.remote > .rwin { stroke: none; }
.remote > .rsearch { width: 22px; height: 22px; margin: 0 28px 0 29px; stroke-width: 2.200; }
.rview { width: 17px; height: 16px; margin-right: 19px; }
.task { width: 160px; height: 40px; display: flex; align-items: center; margin-right: 1px; padding-top: 2px; }
.edge { background: #333; border-bottom: 2px solid #76b9ed; padding-left: 10px; gap: 4px; }
.chat { background: #98501b; border-bottom: 2px solid #ff7a0c; padding-left: 12px; }
.badged { position: relative; width: 26px; }
.badged em { position: absolute; left: 8px; top: 7px; width: 16px; height: 16px; border-radius: 8px; background: #c42b1c; font-size: 12px; line-height: 16px; text-align: center; }
.tray { margin-left: auto; display: flex; align-items: center; height: 40px; padding-right: 6px; border-right: 1px solid #555; margin-right: 3px; }
.up { width: 12px; height: 8px; }
.vol { margin: 0 9px 0 9px; }
.two { display: flex; flex-direction: column; align-items: center; line-height: 17px; }
.remote .two { padding-bottom: 1px; }
.d { width: 54px; margin-left: 12px; }

.host { height: 48px; background: #dadada; border-top: 1px solid #c2c2c2; display: flex; align-items: center; flex: none; color: #222; }
.weather { position: relative; width: 228px; padding-left: 22px; }
.weather em { position: absolute; left: 31px; top: -7px; width: 16px; height: 16px; border-radius: 8px; background: #c42b1c; color: #fff; font-size: 10px; line-height: 16px; text-align: center; }
.hwin { width: 23px; height: 23px; margin-left: 22px; }
.hsearch { width: 218px; height: 31px; margin: 0 3px 0 14px; border-radius: 16px; background: #f3f3f3; box-shadow: 0 0 1px 1px #c7c7c7; display: flex; align-items: center; padding-left: 10px; gap: 10px; font-size: 14px; color: #5c5c5c; }
.hsearch svg { fill: none; stroke: #222; stroke-width: 1.700; }
.apps { display: flex; }
.apps i { position: relative; width: 44px; height: 46px; display: flex; align-items: center; justify-content: center; flex: none; }
.apps .mail { padding-left: 5px; }
.run1::after, .cur::after { content: ""; position: absolute; bottom: 5px; left: 19px; width: 6px; height: 3px; border-radius: 2px; background: #828282; }
.alert::before, .cur::before { content: ""; position: absolute; left: 2px; top: 3px; width: 40px; height: 40px; border-radius: 5px; background: #eab0ab; }
.cur::before { left: 3px; width: 38px; background: #f1f1f1; box-shadow: 0 0 1px 1px #e7e7e7; }
.alert::after { background: #c42b1c; }
.cur::after { width: 16px; left: 14px; background: #0078d4; }
.apps svg { position: relative; }
.hcloud { width: 22px; height: 18px; }
.outlook { width: 28px; height: 24px; }
.apps .warn { position: absolute; width: 16px; height: 15px; left: 23px; top: 7px; }
.htray { display: flex; align-items: center; margin-left: 68px; }
.htray svg { fill: none; stroke: #222; stroke-width: 1.200; }
.sync { margin: 0 14px 0 17px; }
.htray .loc { stroke: #1856b8; }
.hl { width: 26px; margin: 0 17px 0 18px; }
.wifi { margin-right: 7px; }
.bat { margin: 0 16px 0 9px; }
.hd { align-items: flex-end; }
.htray .two { padding-bottom: 1px; }
```
FILE: labels.js
```js
// Track each label so that it fills its nominal width.
document.querySelectorAll('.t[data-w]').forEach(function (el) {
  var target = Number(el.dataset.w);
  var natural = el.getBoundingClientRect().width;
  var spacing = (target - natural) / el.textContent.length;
  el.style.letterSpacing = spacing.toFixed(3) + 'px';
  el.style.width = target + 'px';
});
```
